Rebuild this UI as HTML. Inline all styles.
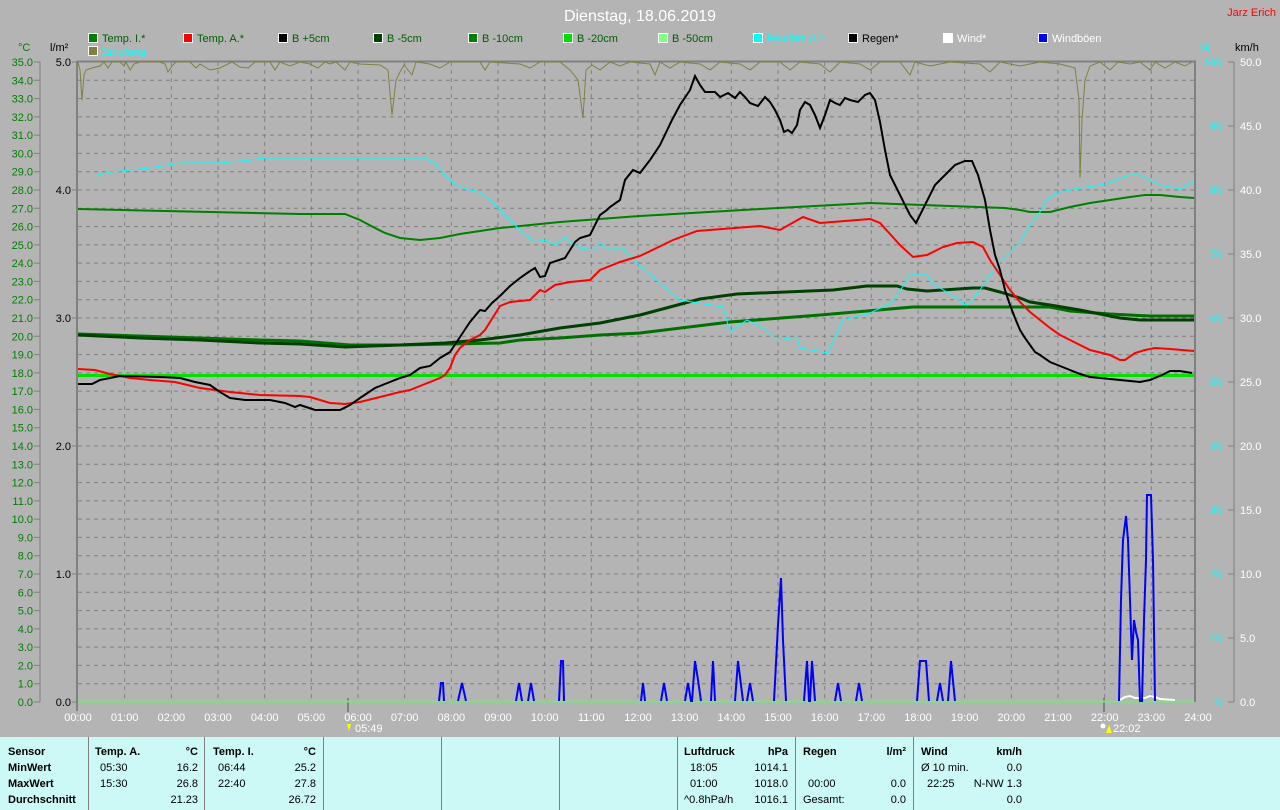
<!DOCTYPE html>
<html><head><meta charset="utf-8"><style>
html,body{margin:0;padding:0;background:#b4b4b4;width:1280px;height:810px;overflow:hidden}
svg{display:block}
text{font-family:"Liberation Sans",sans-serif;font-size:11px}
</style></head><body>
<svg width="1280" height="810" xmlns="http://www.w3.org/2000/svg">
<rect width="1280" height="810" fill="#b4b4b4"/>
<text x="640" y="21" fill="#fff" font-size="16" text-anchor="middle" style="font-size:16px">Dienstag, 18.06.2019</text>
<text x="1276" y="16" fill="#ff0000" text-anchor="end">Jarz Erich</text>
<g stroke="#fff" stroke-width="1">
<rect x="88.5" y="33.5" width="9" height="9" fill="#008000"/>
<rect x="183.5" y="33.5" width="9" height="9" fill="#ff0000"/>
<rect x="278.5" y="33.5" width="9" height="9" fill="#000"/>
<rect x="373.5" y="33.5" width="9" height="9" fill="#004000"/>
<rect x="468.5" y="33.5" width="9" height="9" fill="#008000"/>
<rect x="563.5" y="33.5" width="9" height="9" fill="#00e000"/>
<rect x="658.5" y="33.5" width="9" height="9" fill="#80ff80"/>
<rect x="753.5" y="33.5" width="9" height="9" fill="#00ffff"/>
<rect x="848.5" y="33.5" width="9" height="9" fill="#000"/>
<rect x="943.5" y="33.5" width="9" height="9" fill="#fff"/>
<rect x="1038.5" y="33.5" width="9" height="9" fill="#0000ff"/>
<rect x="88.5" y="46.5" width="9" height="9" fill="#808040"/>
</g>
<g>
<text x="102" y="42" fill="#006000">Temp. I.*</text>
<text x="197" y="42" fill="#006000">Temp. A.*</text>
<text x="292" y="42" fill="#006000">B +5cm</text>
<text x="387" y="42" fill="#006000">B -5cm</text>
<text x="482" y="42" fill="#006000">B -10cm</text>
<text x="577" y="42" fill="#006000">B -20cm</text>
<text x="672" y="42" fill="#006000">B -50cm</text>
<text x="767" y="42" fill="#00ffff">Feuchte A.*</text>
<text x="862" y="42" fill="#000">Regen*</text>
<text x="957" y="42" fill="#fff">Wind*</text>
<text x="1052" y="42" fill="#fff">Windböen</text>
<text x="102" y="55" fill="#00ffff">Empfang</text>
</g>
<text x="18" y="51" fill="#008000">°C</text>
<text x="50" y="51" fill="#000">l/m²</text>
<text x="1200" y="51" fill="#00ffff">%</text>
<text x="1235" y="51" fill="#000">km/h</text>

<g stroke="#808080" stroke-width="1" stroke-dasharray="4,4" fill="none">
<path d="M78 80.3H1194M78 98.6H1194M78 116.9H1194M78 135.1H1194M78 153.4H1194M78 171.7H1194M78 190H1194M78 208.3H1194M78 226.6H1194M78 244.9H1194M78 263.1H1194M78 281.4H1194M78 299.7H1194M78 318H1194M78 336.3H1194M78 354.6H1194M78 372.9H1194M78 391.1H1194M78 409.4H1194M78 427.7H1194M78 446H1194M78 464.3H1194M78 482.6H1194M78 500.9H1194M78 519.1H1194M78 537.4H1194M78 555.7H1194M78 574H1194M78 592.3H1194M78 610.6H1194M78 628.9H1194M78 647.1H1194M78 665.4H1194M78 683.7H1194"/>
<path d="M124.7 62V702M171.3 62V702M218 62V702M264.7 62V702M311.3 62V702M358 62V702M404.7 62V702M451.3 62V702M498 62V702M544.7 62V702M591.3 62V702M638 62V702M684.7 62V702M731.3 62V702M778 62V702M824.7 62V702M871.3 62V702M918 62V702M964.7 62V702M1011.3 62V702M1058 62V702M1104.7 62V702M1151.3 62V702"/>
</g>
<g stroke="#808080" fill="none">
<path d="M77 61V711" stroke-width="2"/>
<path d="M77 61.5H1196" stroke-width="2"/>
<path d="M1195 61V702" stroke-width="2"/>
<path d="M40 62V702" stroke-width="1"/>
<path d="M1234 62V702" stroke-width="1"/>
<path d="M348 698V712M1104 698V712" stroke-width="2"/>
</g>
<g stroke="#808080">
<path d="M34 62H40M34 80.3H40M34 98.6H40M34 116.9H40M34 135.1H40M34 153.4H40M34 171.7H40M34 190H40M34 208.3H40M34 226.6H40M34 244.9H40M34 263.1H40M34 281.4H40M34 299.7H40M34 318H40M34 336.3H40M34 354.6H40M34 372.9H40M34 391.1H40M34 409.4H40M34 427.7H40M34 446H40M34 464.3H40M34 482.6H40M34 500.9H40M34 519.1H40M34 537.4H40M34 555.7H40M34 574H40M34 592.3H40M34 610.6H40M34 628.9H40M34 647.1H40M34 665.4H40M34 683.7H40M34 702H40"/>
<path d="M72 62H77M72 190H77M72 318H77M72 446H77M72 574H77M72 702H77"/>
<path d="M1228 62H1234M1228 126H1234M1228 190H1234M1228 254H1234M1228 318H1234M1228 382H1234M1228 446H1234M1228 510H1234M1228 574H1234M1228 638H1234M1228 702H1234"/>
</g>
<g fill="#008000" text-anchor="end">
<text x="33" y="66">35.0</text><text x="33" y="84.3">34.0</text><text x="33" y="102.6">33.0</text><text x="33" y="120.9">32.0</text><text x="33" y="139.1">31.0</text><text x="33" y="157.4">30.0</text><text x="33" y="175.7">29.0</text><text x="33" y="194">28.0</text><text x="33" y="212.3">27.0</text><text x="33" y="230.6">26.0</text><text x="33" y="248.9">25.0</text><text x="33" y="267.1">24.0</text><text x="33" y="285.4">23.0</text><text x="33" y="303.7">22.0</text><text x="33" y="322">21.0</text><text x="33" y="340.3">20.0</text><text x="33" y="358.6">19.0</text><text x="33" y="376.9">18.0</text><text x="33" y="395.1">17.0</text><text x="33" y="413.4">16.0</text><text x="33" y="431.7">15.0</text><text x="33" y="450">14.0</text><text x="33" y="468.3">13.0</text><text x="33" y="486.6">12.0</text><text x="33" y="504.9">11.0</text><text x="33" y="523.1">10.0</text><text x="33" y="541.4">9.0</text><text x="33" y="559.7">8.0</text><text x="33" y="578">7.0</text><text x="33" y="596.3">6.0</text><text x="33" y="614.6">5.0</text><text x="33" y="632.9">4.0</text><text x="33" y="651.1">3.0</text><text x="33" y="669.4">2.0</text><text x="33" y="687.7">1.0</text><text x="33" y="706">0.0</text>
</g>
<g fill="#000" text-anchor="end">
<text x="71" y="66">5.0</text><text x="71" y="194">4.0</text><text x="71" y="322">3.0</text><text x="71" y="450">2.0</text><text x="71" y="578">1.0</text><text x="71" y="706">0.0</text>
</g>
<g fill="#00ffff" text-anchor="end">
<text x="1222" y="66">100</text><text x="1222" y="130">90</text><text x="1222" y="194">80</text><text x="1222" y="258">70</text><text x="1222" y="322">60</text><text x="1222" y="386">50</text><text x="1222" y="450">40</text><text x="1222" y="514">30</text><text x="1222" y="578">20</text><text x="1222" y="642">10</text><text x="1222" y="706">0</text>
</g>
<g fill="#fff">
<text x="1240" y="66">50.0</text><text x="1240" y="130">45.0</text><text x="1240" y="194">40.0</text><text x="1240" y="258">35.0</text><text x="1240" y="322">30.0</text><text x="1240" y="386">25.0</text><text x="1240" y="450">20.0</text><text x="1240" y="514">15.0</text><text x="1240" y="578">10.0</text><text x="1240" y="642">5.0</text><text x="1240" y="706">0.0</text>
</g>
<g fill="#fff" text-anchor="middle">
<text x="78" y="721">00:00</text><text x="124.7" y="721">01:00</text><text x="171.3" y="721">02:00</text><text x="218" y="721">03:00</text><text x="264.7" y="721">04:00</text><text x="311.3" y="721">05:00</text><text x="358" y="721">06:00</text><text x="404.7" y="721">07:00</text><text x="451.3" y="721">08:00</text><text x="498" y="721">09:00</text><text x="544.7" y="721">10:00</text><text x="591.3" y="721">11:00</text><text x="638" y="721">12:00</text><text x="684.7" y="721">13:00</text><text x="731.3" y="721">14:00</text><text x="778" y="721">15:00</text><text x="824.7" y="721">16:00</text><text x="871.3" y="721">17:00</text><text x="918" y="721">18:00</text><text x="964.7" y="721">19:00</text><text x="1011.3" y="721">20:00</text><text x="1058" y="721">21:00</text><text x="1104.7" y="721">22:00</text><text x="1151.3" y="721">23:00</text><text x="1198" y="721">24:00</text>
</g>
<text x="355" y="732" fill="#fff">05:49</text>
<path d="M347 724L351 724L349 731Z" fill="#ffff00"/>
<text x="1113" y="732" fill="#fff">22:02</text>
<path d="M1106 733L1109 725L1112 733Z" fill="#ffff00"/>
<circle cx="1103" cy="726" r="2.5" fill="#fff"/>

<path d="M78 701.5H1194" stroke="#80e080" stroke-width="2"/>
<polyline fill="none" stroke="#808040" stroke-width="1" points="78,62 80,70 82,100 84,75 86,70 92,68 100,66 104,62 108,68 112,62 120,62 124,66 126,62 130,70 134,64 140,62 160,62 165,64 168,72 172,66 176,62 190,62 196,68 200,64 210,70 220,68 232,62 240,67 248,68 255,62 270,62 275,70 280,62 290,66 300,62 310,64 318,68 325,62 330,64 336,62 345,70 350,62 360,64 380,65 388,70 392,115 396,80 400,72 404,65 412,75 416,62 430,64 440,68 450,62 480,62 485,70 490,62 520,64 530,68 540,62 560,62 570,70 578,80 583,118 586,70 592,65 600,70 610,62 620,66 630,62 650,64 655,75 660,62 670,68 680,62 700,64 710,70 720,62 740,64 750,70 760,62 780,62 790,70 800,62 820,64 830,72 840,62 860,64 870,70 880,62 900,62 910,75 915,62 930,66 950,62 980,64 990,72 1000,62 1020,66 1040,62 1060,64 1075,68 1079,100 1080,178 1082,120 1085,80 1090,66 1100,62 1110,70 1118,62 1130,64 1140,62 1150,70 1155,62 1165,68 1175,62 1185,66 1192,62"/>
<path d="M78 375.5H1194" stroke="#00e000" stroke-width="3"/>
<polyline fill="none" stroke="#007000" stroke-width="3" points="78,334 200,338 260,340 300,341 350,345 400,345 500,343 520,340 560,338 600,335 640,333 730,322 820,315 913,307 1000,307 1050,307 1070,311 1110,314 1150,316 1194,316"/>
<polyline fill="none" stroke="#004000" stroke-width="3" points="78,335 140,338 200,340 260,343 300,344 345,347 400,345 445,343 480,340 520,335 560,328 600,323 640,315 700,299 737,294 833,290 867,286 897,286 907,289 927,291 973,288 985,288 1000,292 1010,295 1020,298 1030,302 1050,305 1080,310 1100,314 1120,318 1140,320 1194,320"/>
<polyline fill="none" stroke="#008000" stroke-width="2" points="78,209 300,214 345,214 360,220 375,228 385,233 400,238 420,240 440,238 460,234 500,228 560,222 640,216 760,209 870,203 1005,208 1020,210 1030,212 1050,212 1070,207 1090,203 1110,200 1130,197 1145,195 1160,195 1180,197 1194,198"/>
<polyline fill="none" stroke="#00ffff" stroke-width="1" points="98,175 110,172 130,170 150,168 180,163 220,163 250,160 265,158 300,158 425,158 435,163 445,175 455,185 470,190 480,192 490,200 500,210 510,220 520,230 535,242 545,240 555,245 565,238 580,248 595,250 600,243 610,250 620,247 630,255 640,266 660,283 680,300 723,307 730,332 747,320 767,330 777,340 797,337 800,348 828,353 843,320 870,313 893,302 910,275 927,275 930,282 960,300 965,305 970,303 980,290 990,275 1000,262 1010,252 1020,242 1030,225 1040,212 1045,203 1050,197 1060,192 1080,188 1095,186 1110,183 1120,178 1130,175 1140,175 1150,180 1160,185 1180,189 1193,182"/>
<polyline fill="none" stroke="#ff0000" stroke-width="2" points="78,369 95,370 110,374 130,378 150,380 175,382 200,388 230,392 260,395 300,396 310,397 330,403 345,404 360,402 380,397 400,392 410,390 420,386 430,382 440,378 445,375 450,368 455,355 460,348 470,340 480,335 485,330 490,322 500,306 510,302 530,300 540,290 545,292 555,285 570,282 590,280 600,270 610,266 620,262 640,256 673,240 697,231 760,226 780,230 803,217 820,223 870,219 880,223 900,245 913,257 927,255 943,247 957,243 973,242 983,247 990,260 1000,275 1010,290 1020,302 1030,312 1040,320 1050,328 1060,335 1070,340 1080,345 1090,350 1110,355 1120,360 1125,360 1135,353 1145,350 1155,348 1170,349 1194,351"/>
<polyline fill="none" stroke="#000" stroke-width="2" points="78,384 92,384 100,380 110,378 120,376 160,377 180,378 195,382 210,385 220,392 230,398 245,400 270,400 285,403 295,407 300,405 315,410 340,410 350,405 360,398 375,388 390,382 400,378 410,375 420,368 430,366 440,358 450,352 460,337 470,322 480,310 485,311 492,303 500,296 510,286 520,278 530,271 535,268 540,277 545,276 550,263 565,258 575,242 580,238 590,235 600,215 607,210 610,207 620,200 625,180 633,170 640,173 650,160 660,145 672,120 680,105 690,90 695,76 700,85 705,92 715,92 720,97 728,93 735,98 740,92 745,97 750,103 758,106 765,97 770,102 775,110 780,120 784,132 788,130 792,133 797,125 800,110 805,102 810,105 815,115 820,128 825,115 830,100 835,103 840,105 845,98 850,100 858,102 865,95 870,93 875,100 880,122 885,150 890,175 900,195 910,215 916,223 925,205 935,185 945,175 955,165 965,161 972,161 978,175 985,200 990,230 995,255 1000,270 1005,290 1010,305 1015,318 1020,330 1025,338 1030,345 1035,352 1040,355 1050,362 1060,366 1070,370 1080,374 1090,377 1100,378 1120,380 1140,382 1150,380 1162,375 1170,371 1180,371 1192,373"/>
<polyline fill="none" stroke="#fff" stroke-width="2" points="1120,700 1125,697 1130,696 1135,698 1145,698 1150,696 1155,697 1160,699 1175,700"/>
<path fill="none" stroke="#0000ff" stroke-width="2" d="M439 701L441 683L443 683L444 701M458 701L462 683L466 701M516 701L519 683L522 701M528 701L531 683L534 701M559 701L561 661L563 661L564 701M641 701L643 683L645 701M661 701L664 683L667 701M685 701L688 683L691 701L692 701L695 661L698 680L701 701M711 701L713 661L715 701M735 701L738 661L743 701M747 701L750 683L753 701M774 701L778 625L781 578L783 640L786 701M804 701L807 661L809 701L810 701L812 661L815 701M835 701L838 683L841 701M856 701L859 683L862 701M917 701L920 661L926 661L929 701M937 701L940 683L943 701M948 701L951 661L955 701M1119 701L1121 600L1123 540L1126 516L1128 540L1130 600L1132 660L1134 620L1136 632L1138 640L1140 701L1142 701L1144 620L1146 560L1147 495L1151 495L1153 560L1155 701"/>

<rect x="0" y="737" width="1280" height="73" fill="#ccf9f5"/>
<g stroke="#808080" stroke-width="1">
<path d="M88.5 737V810M204.5 737V810M323.5 737V810M441.5 737V810M559.5 737V810M677.5 737V810M795.5 737V810M913.5 737V810"/>
</g>
<g fill="#000" font-weight="bold">
<text x="8" y="755" font-weight="bold">Sensor</text>
<text x="8" y="771" font-weight="bold">MinWert</text>
<text x="8" y="787" font-weight="bold">MaxWert</text>
<text x="8" y="803" font-weight="bold">Durchschnitt</text>
<text x="95" y="755" font-weight="bold">Temp. A.</text>
<text x="198" y="755" font-weight="bold" text-anchor="end">°C</text>
<text x="213" y="755" font-weight="bold">Temp. I.</text>
<text x="316" y="755" font-weight="bold" text-anchor="end">°C</text>
<text x="684" y="755" font-weight="bold">Luftdruck</text>
<text x="788" y="755" font-weight="bold" text-anchor="end">hPa</text>
<text x="803" y="755" font-weight="bold">Regen</text>
<text x="906" y="755" font-weight="bold" text-anchor="end">l/m²</text>
<text x="921" y="755" font-weight="bold">Wind</text>
<text x="1022" y="755" font-weight="bold" text-anchor="end">km/h</text>
</g>
<g fill="#000">
<text x="100" y="771">05:30</text><text x="198" y="771" text-anchor="end">16.2</text>
<text x="100" y="787">15:30</text><text x="198" y="787" text-anchor="end">26.8</text>
<text x="198" y="803" text-anchor="end">21.23</text>
<text x="218" y="771">06:44</text><text x="316" y="771" text-anchor="end">25.2</text>
<text x="218" y="787">22:40</text><text x="316" y="787" text-anchor="end">27.8</text>
<text x="316" y="803" text-anchor="end">26.72</text>
<text x="690" y="771">18:05</text><text x="788" y="771" text-anchor="end">1014.1</text>
<text x="690" y="787">01:00</text><text x="788" y="787" text-anchor="end">1018.0</text>
<text x="684" y="803">^0.8hPa/h</text><text x="788" y="803" text-anchor="end">1016.1</text>
<text x="808" y="787">00:00</text><text x="906" y="787" text-anchor="end">0.0</text>
<text x="803" y="803">Gesamt:</text><text x="906" y="803" text-anchor="end">0.0</text>
<text x="921" y="771">Ø 10 min.</text><text x="1022" y="771" text-anchor="end">0.0</text>
<text x="927" y="787">22:25</text><text x="1022" y="787" text-anchor="end">N-NW 1.3</text>
<text x="1022" y="803" text-anchor="end">0.0</text>
</g>
</svg>
</body></html>
